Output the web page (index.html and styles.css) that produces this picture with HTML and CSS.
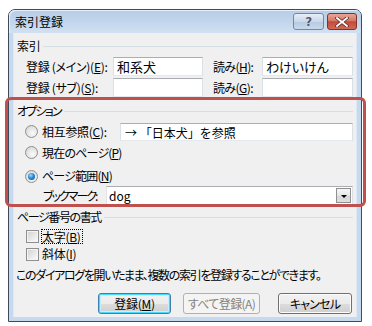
FILE: index.html
```html
<!DOCTYPE html>
<html lang="ja">
<head>
<meta charset="utf-8">
<title>索引登録</title>
<link rel="stylesheet" href="styles.css">
</head>
<body>
<div class="window">
  <div class="titlebar">
    <span class="title">索引登録</span>
    <div class="caption-btns">
      <span class="cbtn help">?</span>
      <span class="cbtn close"><svg width="14" height="10" viewBox="0 0 14 10"><path d="M2 1 L12 9 M12 1 L2 9" stroke="#5a2a24" stroke-width="3.4" stroke-linecap="square"/><path d="M2 1 L12 9 M12 1 L2 9" stroke="#ffffff" stroke-width="1.8" stroke-linecap="square"/></svg></span>
    </div>
  </div>
  <div class="client">
    <div class="group-head"><span>索引</span></div>
    <div class="row entry-row first">
      <span class="lbl-main">登録 (メイン)(<u>E</u>):</span>
      <span class="textbox tb-main">和系犬</span>
      <span class="lbl-yomi">読み(<u>H</u>):</span>
      <span class="textbox tb-yomi">わけいけん</span>
    </div>
    <div class="row entry-row second">
      <span class="lbl-main">登録 (サブ)(<u>S</u>):</span>
      <span class="textbox tb-main"></span>
      <span class="lbl-yomi">読み(<u>G</u>):</span>
      <span class="textbox tb-yomi"></span>
    </div>

    <div class="group-head gh-options"><span>オプション</span></div>
    <div class="row radio-row r1">
      <span class="radio"></span>
      <span class="radio-lbl">相互参照(<u>C</u>):</span>
      <span class="textbox tb-xref">→ 「日本犬」を参照</span>
    </div>
    <div class="row radio-row r2">
      <span class="radio"></span>
      <span class="opt-lbl">現在のページ(<u>P</u>)</span>
    </div>
    <div class="row radio-row r3">
      <span class="radio checked"></span>
      <span class="opt-lbl">ページ範囲(<u>N</u>)</span>
    </div>
    <div class="row bookmark-row">
      <span class="bm-lbl">ブックマーク:</span>
      <span class="combo"><span class="combo-text">dog</span><span class="combo-btn"></span></span>
    </div>

    <div class="group-head gh-format"><span>ページ番号の書式</span></div>
    <div class="row check-row c1">
      <span class="checkbox"></span>
      <span class="focus">太字(<u>B</u>)</span>
    </div>
    <div class="row check-row c2">
      <span class="checkbox"></span>
      <span class="check-lbl">斜体(<u>I</u>)</span>
    </div>
    <div class="note">このダイアログを開いたまま、複数の索引を登録することができます。</div>
    <div class="button-row">
      <span class="btn default">登録(<u>M</u>)</span>
      <span class="btn disabled">すべて登録(A)</span>
      <span class="btn cancel">キャンセル</span>
    </div>
  </div>
  <div class="highlight"></div>
</div>
</body>
</html>
```

FILE: styles.css
```css
html, body {
  margin: 0;
  padding: 0;
  background: #ffffff;
}
body {
  font-family: "Noto Sans CJK JP", "Noto Sans", sans-serif;
  font-size: 12px;
  color: #000;
  font-feature-settings: "palt";
  letter-spacing: -0.3px;
}
u { text-decoration: underline; text-underline-offset: 1px; }

.window {
  position: relative;
  margin: 9px 0 0 8px;
  width: 354px;
  height: 313px;
  box-sizing: border-box;
  border: 1px solid #3f4b5a;
  border-radius: 7px 7px 0 0;
  background: #c6d9ee;
  display: flex;
  flex-direction: column;
}

.titlebar {
  height: 23px;
  display: flex;
  align-items: center;
  justify-content: space-between;
  padding: 0 4px 0 6px;
  background: linear-gradient(#b7cde6, #c3d6ec 55%, #d2e1f1);
  border-radius: 6px 6px 0 0;
  box-shadow: inset 1px 1px 0 #e6eef8;
}
.title {
  font-size: 12px;
  line-height: 16px;
  color: #000;
  margin-top: 1px;
  letter-spacing: 0;
  font-feature-settings: normal;
}
.caption-btns {
  display: flex;
  gap: 3px;
  align-self: flex-start;
  margin-top: 3px;
}
.cbtn {
  box-sizing: border-box;
  height: 17px;
  display: flex;
  align-items: center;
  justify-content: center;
  border-radius: 3px;
}
.help {
  width: 31px;
  border: 1px solid #7189a8;
  background: linear-gradient(#e7eef7, #c9d8ea 50%, #b6c9e0 51%, #c9d9ec);
  color: #4a5a70;
  font-family: "DejaVu Sans", sans-serif;
  font-size: 12px;
  font-weight: bold;
  text-shadow: 0 0 1px #fff;
}
.close {
  width: 30px;
  border: 1px solid #7e332b;
  background: linear-gradient(#e9a597, #d27a68 45%, #c24a38 52%, #d36a54);
}

.client {
  margin: 0 4px;
  height: 284px;
  background: #f0f0f0;
  box-sizing: border-box;
  padding: 6px 4px 0 4px;
  display: flex;
  flex-direction: column;
  box-shadow: inset 1px 0 0 #dfe9f5, inset -1px 0 0 #dfe9f5;
}

.group-head {
  height: 14px;
  line-height: 14px;
  display: flex;
  align-items: center;
  white-space: nowrap;
}
.group-head::after {
  content: "";
  flex: 1;
  height: 1px;
  background: #d5dfe5;
  margin-left: 3px;
}
.gh-options { margin-top: 7px; letter-spacing: -1.8px; }
.gh-format { margin-top: 5px; letter-spacing: -1.4px; }

.row {
  display: flex;
  align-items: center;
  line-height: 14px;
  white-space: nowrap;
}
.entry-row {
  height: 19px;
  margin-left: 9px;
}
.entry-row.first { margin-top: 4px; }
.entry-row.second { margin-top: 2px; }
.lbl-main { width: 87px; flex: none; }
.lbl-yomi { width: 49px; margin-left: 10px; flex: none; letter-spacing: -0.6px; }

.textbox {
  box-sizing: border-box;
  height: 19px;
  background: #fff;
  border: 1px solid #abadb3;
  border-left-color: #dbdfe6;
  border-right-color: #dbdfe6;
  border-bottom-color: #e3e9ef;
  padding: 1px 3px 0;
  line-height: 15px;
  white-space: nowrap;
  overflow: hidden;
  flex: none;
}
.tb-main { width: 90px; font-size: 13px; letter-spacing: 0; }
.tb-yomi { width: 91px; font-size: 13px; letter-spacing: 0; }

.radio-row { margin-left: 8px; height: 19px; }
.radio-row.r1 { margin-top: 4px; }
.radio-row.r2 { margin-top: 2px; }
.radio-row.r3 { margin-top: 5px; height: 18px; }
.radio {
  box-sizing: border-box;
  width: 13px;
  height: 13px;
  border-radius: 50%;
  border: 1px solid #8f8f8f;
  background: radial-gradient(circle at 60% 65%, #fafafa 0, #e8e8e8 45%, #cfcfcf 100%);
  margin-right: 4px;
  flex: none;
  display: flex;
  align-items: center;
  justify-content: center;
}
.radio.checked::after {
  content: "";
  width: 7px;
  height: 7px;
  border-radius: 50%;
  background: radial-gradient(circle at 40% 35%, #9fdcff 0, #2a8ad6 45%, #0d4f96 100%);
}
.radio-lbl { width: 78px; flex: none; }
.opt-lbl { letter-spacing: -0.8px; }
.tb-xref {
  width: 233px;
  height: 18px;
  letter-spacing: 0;
  padding-left: 4px;
  font-feature-settings: normal;
}

.bookmark-row {
  margin-top: 1px;
  margin-left: 26px;
  height: 19px;
}
.bm-lbl { width: 63px; flex: none; letter-spacing: -2px; }
.combo {
  width: 247px;
  flex: none;
  height: 19px;
  box-sizing: border-box;
  background: #fff;
  border: 1px solid #abadb3;
  border-left-color: #e2e3ea;
  border-right-color: #dbdfe6;
  border-bottom-color: #e3e9ef;
  display: flex;
  align-items: center;
  justify-content: space-between;
  padding-left: 2px;
}
.combo-text { line-height: 14px; letter-spacing: 0; }
.combo-btn {
  width: 15px;
  height: 15px;
  box-sizing: border-box;
  margin-right: 1px;
  border: 1px solid #8e8f8f;
  background: linear-gradient(#f6f6f6, #e6e6e6 50%, #d6d6d6 51%, #e0e0e0);
  display: flex;
  align-items: center;
  justify-content: center;
}
.combo-btn::after {
  content: "";
  width: 0;
  height: 0;
  border-left: 3px solid transparent;
  border-right: 3px solid transparent;
  border-top: 3px solid #000;
  margin-top: 1px;
}

.check-row { margin-left: 9px; height: 18px; }
.check-row.c1 { margin-top: 3px; }
.checkbox {
  box-sizing: border-box;
  width: 13px;
  height: 13px;
  border: 1px solid #8f8f8f;
  background: linear-gradient(135deg, #d0d0d0, #f0f0f0 70%, #fbfbfb);
  box-shadow: inset 0 0 0 1px #f4f4f4;
  margin-right: 3px;
  flex: none;
}
.focus {
  outline: 1px dotted #000;
  outline-offset: 0;
  padding: 0 1px 0 0;
  line-height: 13px;
}

.note {
  margin-top: 5px;
  height: 14px;
  line-height: 14px;
  margin-left: -1px;
  white-space: nowrap;
  letter-spacing: -1.35px;
}

.button-row {
  margin-top: 11px;
  display: flex;
  justify-content: flex-end;
  padding-right: 1px;
}
.btn {
  box-sizing: border-box;
  height: 21px;
  display: flex;
  align-items: center;
  justify-content: center;
  border-radius: 3px;
  border: 1px solid #707070;
  background: linear-gradient(#f2f2f2, #ebebeb 50%, #dddddd 51%, #cfcfcf);
  box-shadow: inset 0 0 0 1px #fcfcfc;
  line-height: 14px;
  flex: none;
}
.btn.default {
  width: 73px;
  border-color: #3c7fb1;
  box-shadow: inset 0 0 0 1px #48d8fb, inset 0 0 0 2px #c8eefc;
}
.btn.disabled {
  width: 77px;
  margin-left: 12px;
  border-color: #adb2b5;
  background: #f4f4f4;
  box-shadow: none;
  color: #838383;
  letter-spacing: -0.6px;
}
.btn.cancel {
  width: 74px;
  margin-left: 18px;
  letter-spacing: -0.8px;
}

.highlight {
  position: absolute;
  left: -4px;
  top: 87px;
  width: 361px;
  height: 110px;
  box-sizing: border-box;
  border: 3px solid #c0504d;
  border-radius: 6px;
  pointer-events: none;
}
```
